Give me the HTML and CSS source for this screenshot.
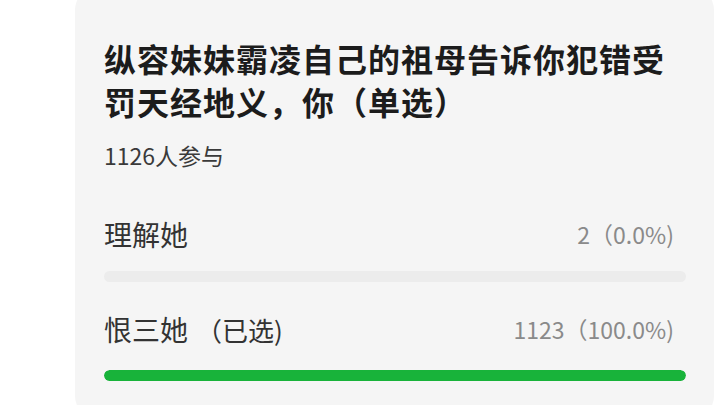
FILE: index.html
```html
<!DOCTYPE html>
<html lang="zh">
<head>
<meta charset="utf-8">
<link rel="stylesheet" href="styles.css">
</head>
<body>
<div class="card">
  <h1 class="title">纵容妹妹霸凌自己的祖母告诉你犯错受罚天经地义，你（单选）</h1>
  <div class="count">1126人参与</div>
  <div class="option">
    <div class="row"><span class="label">理解她</span><span class="num">2（0.0%)</span></div>
    <div class="track"><div class="fill" style="width:0%"></div></div>
  </div>
  <div class="option second">
    <div class="row"><span class="label">恨三她<span class="sel">（已选)</span></span><span class="num">1123（100.0%)</span></div>
    <div class="track"><div class="fill" style="width:100%"></div></div>
  </div>
</div>
</body>
</html>
```
FILE: styles.css
```css
html, body {
  margin: 0;
  padding: 0;
  background: #ffffff;
  width: 720px;
  height: 405px;
  overflow: hidden;
  font-family: "Noto Sans CJK SC", "Noto Sans", sans-serif;
}
.card {
  margin: -12px 0 0 75px;
  width: 639px;
  height: 430px;
  box-sizing: border-box;
  background: #f5f5f5;
  border-radius: 22px;
  padding: 49px 28px 0 29px;
}
.title {
  margin: 0;
  font-size: 32px;
  line-height: 43px;
  font-weight: 700;
  color: #1c1c1c;
  letter-spacing: 1px;
}
.count {
  margin-top: 17px;
  font-size: 23px;
  line-height: 30px;
  color: #3a3a3a;
}
.option {
  margin-top: 46px;
}
.option.second {
  margin-top: 29px;
}
.row {
  display: flex;
  justify-content: space-between;
  align-items: center;
  height: 36px;
}
.label {
  font-size: 28px;
  color: #333333;
}
.sel {
  font-size: 26px;
  margin-left: 8px;
}
.num {
  font-size: 23px;
  color: #8a8a8a;
  margin-right: 12px;
}
.track {
  margin-top: 19px;
  height: 11px;
  border-radius: 6px;
  background: #ececec;
  overflow: hidden;
}
.option.second .track {
  margin-top: 23px;
}
.fill {
  height: 100%;
  background: #18b33a;
  border-radius: 6px;
}
```
